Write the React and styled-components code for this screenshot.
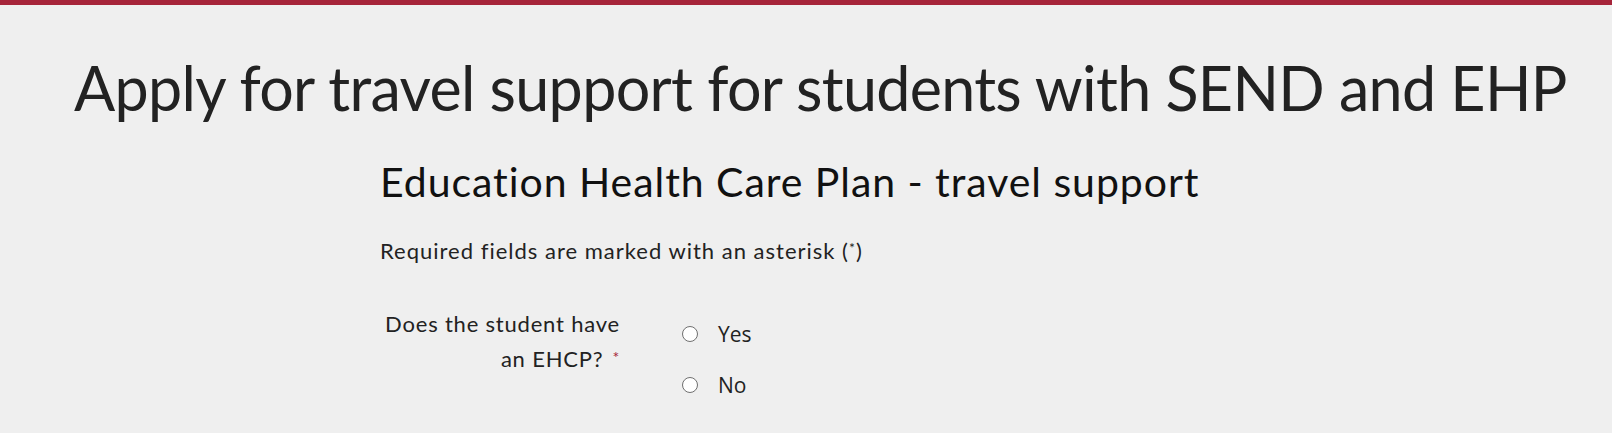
import React from "react";
import styled, { createGlobalStyle } from "styled-components";

const Global = createGlobalStyle`
  html, body { margin: 0; padding: 0; background: #efefef; }
  body { font-family: "Lato", "Open Sans", sans-serif; color: #222; }
`;

const Page = styled.div`
  border-top: 5px solid #a6243a;
  background: #efefef;
  min-height: 428px;
`;

const Title = styled.h1`
  margin: 0;
  padding: 43px 0 0 74px;
  font-size: 61px;
  line-height: 80px;
  font-weight: 400;
  letter-spacing: -0.68px;
  color: #222;
  white-space: nowrap;
`;

const Form = styled.div`
  padding-left: 380px;
`;

const SubTitle = styled.h2`
  margin: 29px 0 0;
  font-size: 41px;
  line-height: 50px;
  font-weight: 400;
  letter-spacing: 0.95px;
  color: #111;
`;

const Note = styled.p`
  margin: 27px 0 0;
  font-size: 22px;
  line-height: 28px;
  letter-spacing: 1px;
  color: #222;
`;

const Sup = styled.span`
  font-size: 14px;
  vertical-align: 6px;
`;

const Field = styled.div`
  display: grid;
  grid-template-columns: 240px 1fr;
  column-gap: 62px;
  margin-top: 42px;
`;

const Label = styled.div`
  text-align: right;
  font-size: 22px;
  line-height: 33px;
  letter-spacing: 0.8px;
  color: #222;
  white-space: nowrap;
  justify-self: end;
`;

const Req = styled.span`
  color: #a6243a;
  font-size: 16px;
  margin-left: 9px;
  vertical-align: 4px;
`;

const Options = styled.div`
  display: flex;
  flex-direction: column;
  gap: 19px;
  padding-top: 11px;
`;

const Option = styled.label`
  display: flex;
  align-items: center;
  gap: 20px;
  font-family: "Open Sans", sans-serif;
  font-size: 21px;
  line-height: 32px;
  color: #222;
`;

const Radio = styled.span`
  width: 16px;
  height: 16px;
  border: 1px solid #6f6f6f;
  border-radius: 50%;
  background: #fff;
  box-sizing: border-box;
`;

export default function App() {
  return (
    <>
      <Global />
      <Page>
        <Title>Apply for travel support for students with SEND and EHP</Title>
        <Form>
          <SubTitle>Education Health Care Plan - travel support</SubTitle>
          <Note>
            Required fields are marked with an asterisk (<Sup>*</Sup>)
          </Note>
          <Field>
            <Label>
              Does the student have
              <br />
              an EHCP?<Req>*</Req>
            </Label>
            <Options>
              <Option>
                <Radio />
                Yes
              </Option>
              <Option>
                <Radio />
                No
              </Option>
            </Options>
          </Field>
        </Form>
      </Page>
    </>
  );
}
